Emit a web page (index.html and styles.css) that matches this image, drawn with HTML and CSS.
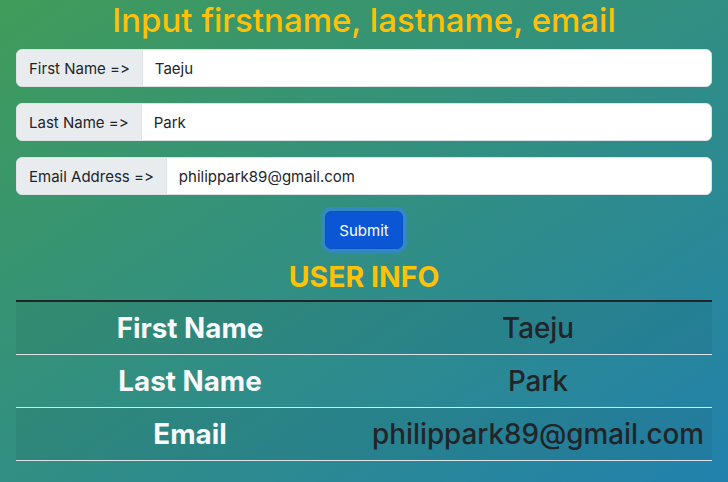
FILE: index.html
```html
<!DOCTYPE html>
<html lang="en">
<head>
<meta charset="utf-8">
<title>User Info</title>
<link rel="stylesheet" href="styles.css">
</head>
<body>
<div class="page">
  <h1 class="title">Input firstname, lastname, email</h1>
  <form class="form">
    <div class="input-group">
      <span class="group-text">First Name =&gt;</span>
      <input class="control" type="text" value="Taeju">
    </div>
    <div class="input-group">
      <span class="group-text">Last Name =&gt;</span>
      <input class="control" type="text" value="Park">
    </div>
    <div class="input-group">
      <span class="group-text">Email Address =&gt;</span>
      <input class="control" type="email" value="philippark89@gmail.com">
    </div>
    <div class="actions">
      <button class="btn" type="button">Submit</button>
    </div>
  </form>
  <h2 class="subtitle">USER INFO</h2>
  <table class="info">
    <tbody>
      <tr class="striped"><th>First Name</th><td>Taeju</td></tr>
      <tr><th>Last Name</th><td>Park</td></tr>
      <tr class="striped"><th>Email</th><td>philippark89@gmail.com</td></tr>
    </tbody>
  </table>
</div>
</body>
</html>
```

FILE: styles.css
```css
* { box-sizing: border-box; }
html, body { height: 100%; }
body {
  margin: 0;
  font-family: Inter, "Noto Sans", sans-serif;
  font-feature-settings: "calt" 0, "liga" 0;
  font-variant-ligatures: none;
  color: #212529;
  background: linear-gradient(to bottom right, #409c59, #2281ad);
}
.page {
  padding: 0 16px;
}
.title {
  margin: 0 0 8px;
  text-align: center;
  color: #ffc107;
  font-size: 33px;
  font-weight: 500;
  line-height: 41px;
}
.form { margin: 0; }
.input-group {
  display: flex;
  height: 38px;
  margin-bottom: 16px;
}
.group-text {
  display: flex;
  align-items: center;
  padding: 0 12px;
  font-size: 15px;
  color: #212529;
  background: #e9ecef;
  border: 1px solid #dee2e6;
  border-radius: 6px 0 0 6px;
  white-space: nowrap;
}
.control {
  flex: 1;
  min-width: 0;
  margin-left: -1px;
  padding: 0 12px;
  font: inherit;
  font-size: 15px;
  color: #212529;
  background: #fff;
  border: 1px solid #dee2e6;
  border-radius: 0 6px 6px 0;
  outline: none;
}
.actions {
  display: flex;
  justify-content: center;
  margin-bottom: 11px;
}
.btn {
  height: 38px;
  padding: 0 13px;
  font: inherit;
  font-size: 15px;
  color: #fff;
  background: #0b56d4;
  border: 1px solid #0a53c6;
  border-radius: 6px;
  box-shadow: 0 0 0 4px rgba(49, 132, 253, 0.5);
}
.subtitle {
  margin: 0 0 7px;
  text-align: center;
  color: #ffc107;
  font-size: 28.5px;
  font-weight: 700;
  line-height: 33px;
}
.info {
  width: 100%;
  border-collapse: collapse;
  table-layout: fixed;
}
.info tbody { border-top: 2px solid #212529; }
.info tr { border-bottom: 1px solid #dee2e6; }
.info tr.striped { background: rgba(0, 0, 0, 0.05); }
.info th, .info td {
  padding: 8px;
  font-size: 27.8px;
  line-height: 36px;
  text-align: center;
  white-space: nowrap;
}
.info th {
  color: #f8f9fa;
  font-weight: 700;
}
.info td {
  color: #212529;
  font-weight: 500;
}
```
